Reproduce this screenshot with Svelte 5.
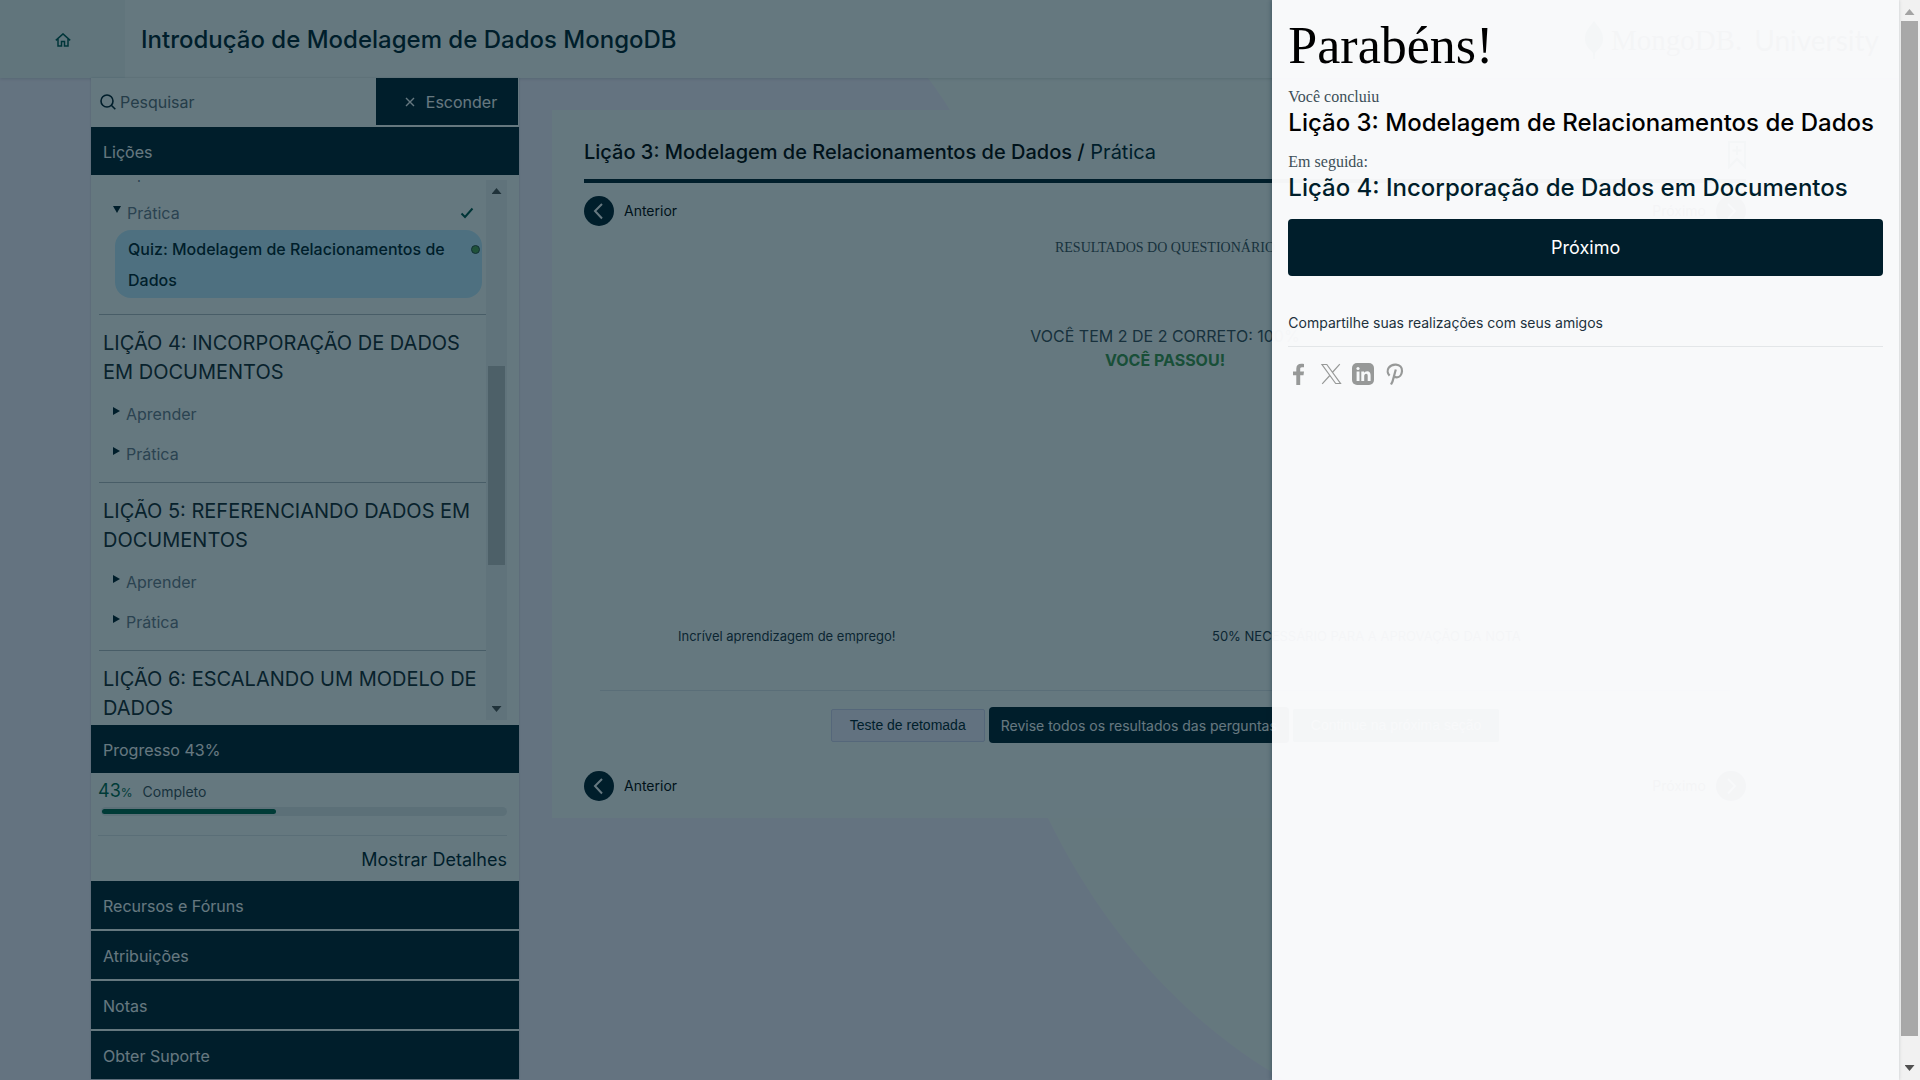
<script>
  import { onMount } from 'svelte';

  const lessons = [
    { title: 'LIÇÃO 4: INCORPORAÇÃO DE DADOS EM DOCUMENTOS', items: ['Aprender', 'Prática'] },
    { title: 'LIÇÃO 5: REFERENCIANDO DADOS EM DOCUMENTOS', items: ['Aprender', 'Prática'] },
    { title: 'LIÇÃO 6: ESCALANDO UM MODELO DE DADOS', items: [] }
  ];
  const sections = ['Recursos e Fóruns', 'Atribuições', 'Notas', 'Obter Suporte'];
  const progress = 43;

  let list;
  onMount(() => {
    list.scrollTop = 27;
  });
</script>

{#snippet check()}
  <svg class="check" viewBox="0 0 14 12" aria-hidden="true"><path d="M1.5 6.5 5 10 12.5 1.5" /></svg>
{/snippet}

{#snippet pager(next)}
  <div class="pager">
    <a class="page-link" href="#anterior">
      <span class="round"><svg viewBox="0 0 30 30" aria-hidden="true"><path d="M18 8l-7 7 7 7.500" /></svg></span>
      <span class="word">Anterior</span>
    </a>
    <a class="page-link" href="#proximo">
      <span class="word">{next}</span>
      <span class="round"><svg viewBox="0 0 30 30" aria-hidden="true"><path d="M12 8l7 7-7 7.500" /></svg></span>
    </a>
  </div>
{/snippet}

<div class="shell">
  <div class="page">
    <svg class="backdrop" viewBox="0 0 1899 1080" preserveAspectRatio="xMinYMin slice" aria-hidden="true">
      <path d="M928 78 C960 120 985 170 1000 240 C985 480 990 700 1048 818 C1100 925 1180 1020 1285 1080 H1899 V78Z" />
    </svg>

    <header>
      <a class="home" href="#inicio" aria-label="Início">
        <svg viewBox="0 0 16 14" aria-hidden="true"><path d="M.8 7.400 8 .9l7.200 6.500M3 6v7h3.500V8.500h3V13H13V6" /></svg>
      </a>
      <h1>Introdução de Modelagem de Dados MongoDB</h1>
      <div class="brand">
        <svg viewBox="0 0 18 38" aria-hidden="true"><path d="M9 0c3 5 9 9 9 18 0 7-5 10-8 14l-.5 6h-1L8 32C5 28 0 25 0 18 0 9 6 5 9 0z" /></svg>
        <span class="brand-name">MongoDB.</span>
        <span class="brand-unit">University</span>
      </div>
    </header>

    <div class="body">
      <aside>
        <div class="search">
          <label for="q" aria-label="Pesquisar">
            <svg viewBox="0 0 16 16" aria-hidden="true"><circle cx="7" cy="7" r="6" /><path d="M11.300 11.300 15.300 15.300" /></svg>
          </label>
          <input id="q" type="text" placeholder="Pesquisar" />
          <button class="hide" type="button">
            <svg viewBox="0 0 10 10" aria-hidden="true"><path d="M1 1l8 8M9 1 1 9" /></svg>
            Esconder
          </button>
        </div>
        <button class="bar" type="button">Lições</button>

        <div class="list-wrap">
          <div class="list" bind:this={list}>
            <section class="first">
              <a class="row" href="#aprender"><i class="tri"></i><span>Aprender</span>{@render check()}</a>
              <a class="row open" href="#pratica"><i class="tri down"></i><span>Prática</span>{@render check()}</a>
              <a class="quiz" href="#quiz"><span>Quiz: Modelagem de Relacionamentos de Dados</span><i class="dot"></i></a>
            </section>
            {#each lessons as lesson}
              <section>
                <h2>{lesson.title}</h2>
                {#each lesson.items as item}
                  <a class="row" href="#item"><i class="tri"></i><span>{item}</span></a>
                {/each}
              </section>
            {/each}
          </div>
          <div class="rail">
            <i class="arrow up"></i>
            <div class="rail-thumb"></div>
            <i class="arrow dn"></i>
          </div>
        </div>

        <button class="bar" type="button">Progresso {progress}%</button>
        <div class="progress">
          <div class="figures"><span class="num">{progress}<small>%</small></span><span>Completo</span></div>
          <div class="track"><div class="fill" style="width: {progress}%"></div></div>
          <a class="details" href="#detalhes">Mostrar Detalhes</a>
        </div>
        <div class="sections">
          {#each sections as name}
            <button class="bar" type="button">{name}</button>
          {/each}
        </div>
      </aside>

      <main>
        <div class="card-head">
          <h2><b>Lição 3: Modelagem de Relacionamentos de Dados /</b> Prática</h2>
          <svg class="bookmark" viewBox="0 0 18 28" aria-hidden="true"><path d="M1 1h16v25l-8-8-8 8zM9 5v9M4.500 9.500h9" /></svg>
        </div>
        {@render pager('Próximo')}
        <div class="results">
          <p class="kicker">RESULTADOS DO QUESTIONÁRIO</p>
          <p class="score">VOCÊ TEM 2 DE 2 CORRETO: 100%</p>
          <p class="passed">VOCÊ PASSOU!</p>
        </div>
        <div class="notes">
          <p>Incrível aprendizagem de emprego!</p>
          <p>50% NECESSÁRIO PARA A APROVAÇÃO DA NOTA</p>
        </div>
        <div class="actions">
          <button class="retake" type="button">Teste de retomada</button>
          <button class="review" type="button">Revise todos os resultados das perguntas</button>
          <button class="continue" type="button">Continue na próxima seção</button>
        </div>
        {@render pager('Próximo')}
      </main>
    </div>
  </div>

  <div class="overlay">
    <div class="drawer" role="dialog" aria-labelledby="congrats">
      <h2 id="congrats">Parabéns!</h2>
      <p class="label">Você concluiu</p>
      <h3>Lição 3: Modelagem de Relacionamentos de Dados</h3>
      <p class="label">Em seguida:</p>
      <h3 class="next-title">Lição 4: Incorporação de Dados em Documentos</h3>
      <button class="next" type="button">Próximo</button>
      <p class="share">Compartilhe suas realizações com seus amigos</p>
      <div class="social">
        <a href="#facebook" aria-label="Facebook"><svg viewBox="0 0 22 22"><path fill="currentColor" d="M8.300 22V12.300H5V8.600h3.300V5.700C8.300 2.400 10.200.7 13.200.7c1.400 0 2.300.1 2.800.2v3.300h-2c-1.500 0-1.800.7-1.800 1.800v2.600H16l-.5 3.700h-3.300V22z" /></svg></a>
        <a href="#x" aria-label="X"><svg viewBox="0 0 22 22"><path fill="none" stroke="currentColor" stroke-width="1.200" d="M2 1.500h4.800L20.500 20.500h-4.800zM19.800 1.200 12.300 9.500M9.800 12.500 2.200 20.800" /></svg></a>
        <a href="#linkedin" aria-label="LinkedIn"><svg viewBox="0 0 22 22"><rect width="22" height="22" rx="5" fill="currentColor" /><g fill="#f7f9fa"><circle cx="6" cy="5.500" r="1.600" /><path d="M4.600 8.500h2.900V18H4.600zM9.300 8.500h2.800v1.400c.5-.9 1.500-1.700 3-1.700 2.600 0 3.500 1.600 3.500 4.300V18h-2.900v-5c0-1.400-.4-2.200-1.500-2.200-1.300 0-2 .9-2 2.400V18H9.300z" /></g></svg></a>
        <a href="#pinterest" aria-label="Pinterest"><svg viewBox="0 0 22 22"><path fill="none" stroke="currentColor" stroke-width="2.200" d="M5.600 12.600C3.400 10.500 3 7.200 4.800 4.700 6.500 2.300 9.400 1.400 12 1.600c3.700.3 6.300 2.800 6 6.500-.3 3.700-2.500 6.400-5.200 6.300-1.600-.1-2.700-.9-3.100-2.100M11.800 6.500 8.500 18.500 7 21.500" /></svg></a>
      </div>
    </div>
  </div>

  <div class="window-rail">
    <i class="arrow up"></i>
    <div class="window-thumb"></div>
    <i class="arrow dn"></i>
  </div>
</div>

<style>
  :global(body) { margin: 0; }
  .shell {
    --navy: #001e2b;
    --serif: "Liberation Serif", serif;
    display: grid;
    grid-template-columns: minmax(0, 1fr) 21px;
    min-height: 100vh;
    font-family: Inter, "Liberation Sans", sans-serif;
    font-size: 16px;
    color: var(--navy);
  }
  .shell * { box-sizing: border-box; }
  h1, h2, h3, p { margin: 0; font-weight: 400; }
  a { color: inherit; text-decoration: none; }
  button, input { font: inherit; color: inherit; border: 0; margin: 0; border-radius: 0; }
  svg { display: block; }

  .page {
    grid-area: 1 / 1;
    position: relative;
    background: #fbf2ff;
    overflow: hidden;
  }
  .backdrop { position: absolute; inset: 0; width: 100%; height: 100%; fill: #fdfffb; }

  header {
    position: relative;
    display: flex;
    align-items: center;
    height: 78px;
    padding: 2px 20px 0 0;
    background: #fdfffc;
    box-shadow: 0 1px 3px rgba(0, 30, 43, 0.15);
  }
  .home {
    display: flex;
    align-items: center;
    justify-content: center;
    width: 125px;
    height: 78px;
    margin-top: -2px;
    padding-top: 2px;
    background: #f2f8f6;
  }
  .home svg { width: 16px; height: 14px; fill: none; stroke: #00574f; stroke-width: 1.500; }
  h1 { flex: 1; padding-left: 16px; font-size: 24px; font-weight: 500; line-height: 32px; }
  .brand { display: flex; align-items: center; color: var(--navy); }
  .brand svg { width: 18px; height: 38px; fill: #00684a; margin-right: 8px; }
  .brand-name { font-family: var(--serif); font-size: 29px; margin-right: 12px; }
  .brand-unit { font-family: Lato, sans-serif; font-size: 28px; }

  .body { position: relative; display: flex; align-items: flex-start; padding: 0 121px 0 91px; gap: 33px; }
  aside { flex: none; width: 428px; background: #fdfffc; box-shadow: 0 0 2px rgba(0, 30, 43, 0.2); }
  .search { display: flex; align-items: center; height: 49px; padding: 0 1px 2px 9px; }
  .search label svg { width: 16px; height: 16px; fill: none; stroke: var(--navy); stroke-width: 1.600; }
  .search input { flex: 1; min-width: 0; height: 46px; padding: 0 4px; background: none; font-size: 16px; }
  .search input::placeholder { color: #5c6c75; opacity: 1; }
  .hide {
    display: flex;
    align-items: center;
    justify-content: center;
    gap: 11px;
    width: 142px;
    height: 47px;
    padding: 0 0 0 8px;
    background: var(--navy);
    color: #fff;
  }
  .hide svg { width: 10px; height: 10px; stroke: #fff; stroke-width: 1.400; }
  .bar {
    display: block;
    width: 100%;
    height: 48px;
    padding: 2px 12px 0;
    background: var(--navy);
    color: #fff;
    text-align: left;
    font-size: 16px;
  }
  .list-wrap { display: flex; padding: 5px 12px 5px 8px; }
  .list { flex: 1; height: 540px; overflow: hidden; }
  .list section { padding: 14px 0 8px; border-top: 1px solid #b5bcc0; }
  .list .first { padding: 0 0 16px; border: 0; }
  .list section:last-child { min-height: 120px; }
  .list h2 { padding: 0 4px; margin-bottom: 7px; font-size: 20px; line-height: 29px; color: #16292f; }
  .row { display: flex; align-items: center; height: 40px; padding: 0 12px 0 14px; color: #6c7a89; }
  .row span { flex: 1; padding-left: 6px; }
  .row.open { height: 37px; padding-top: 2px; }
  .tri { width: 7px; height: 8px; margin-bottom: 6px; background: var(--navy); clip-path: polygon(0 0, 100% 50%, 0 100%); }
  .tri.down { width: 8px; height: 7px; clip-path: polygon(0 0, 100% 0, 50% 100%); }
  .check { width: 14px; height: 12px; fill: none; stroke: #00574a; stroke-width: 2; }
  .quiz {
    display: flex;
    align-items: flex-start;
    justify-content: space-between;
    min-height: 68px;
    margin: 0 4px 0 16px;
    padding: 4px 2px 2px 13px;
    border-radius: 16px;
    background: #c3ecff;
    font-size: 16px;
    font-weight: 500;
    line-height: 31px;
  }
  .quiz span { max-width: 336px; }
  .dot { flex: none; width: 9px; height: 9px; margin-top: 11px; border: 1px solid #2c4a44; border-radius: 50%; background: #50a150; }

  .rail { display: flex; flex-direction: column; align-items: center; width: 21px; padding: 8px 0; background: #f0f3f2; }
  .rail-thumb { width: 17px; height: 199px; margin: 172px 0 auto; background: #c1c4c4; }
  .arrow { width: 10px; height: 6px; background: #505050; }
  .arrow.up { clip-path: polygon(50% 0, 100% 100%, 0 100%); }
  .arrow.dn { clip-path: polygon(0 0, 100% 0, 50% 100%); }

  .progress { display: flex; flex-direction: column; height: 108px; padding: 5px 12px 0 7px; }
  .figures { display: flex; align-items: baseline; gap: 10px; line-height: 26px; font-size: 14px; color: #3d4f58; }
  .num { font-size: 18px; color: #00684a; }
  small { font-size: 12px; }
  .track { height: 9px; margin: 1px 0 0 3px; padding: 2px 1px; border-radius: 5px; background: #e6ebec; }
  .fill { height: 5px; border-radius: 3px; background: #00684a; }
  .details { margin-top: 19px; padding-top: 11px; border-top: 1px solid #e1e6e8; text-align: right; font-size: 18px; line-height: 26px; }
  .sections { display: flex; flex-direction: column; gap: 2px; }

  main { flex: 1; min-width: 0; margin-top: 32px; padding: 27px 32px 17px; background: #fdfffc; }
  .card-head { display: flex; justify-content: space-between; height: 46px; border-bottom: 4px solid var(--navy); }
  .card-head h2 { font-size: 20px; line-height: 30px; }
  .card-head b { font-weight: 500; color: #000; }
  .bookmark { width: 18px; height: 28px; margin-top: 4px; fill: none; stroke: #00684a; stroke-width: 2; }
  .pager { display: flex; justify-content: space-between; margin-top: 13px; font-size: 14px; color: #000; }
  .page-link { display: flex; align-items: center; gap: 10px; }
  .word { padding-bottom: 2px; }
  .round { width: 30px; height: 30px; border-radius: 50%; background: var(--navy); }
  .round svg { fill: none; stroke: #fff; stroke-width: 2; }
  .results { padding-top: 10px; text-align: center; line-height: 24px; color: #3d4f58; }
  .kicker { margin-bottom: 64px; font-family: var(--serif); font-size: 14px; }
  .passed { font-weight: 700; color: #3f9a4c; }
  .notes { display: grid; grid-template-columns: 1fr 1fr; padding: 252px 44px 42px 94px; font-size: 13px; line-height: 24px; color: #21313c; }
  .notes p:last-child { padding-left: 22px; }
  .actions { display: flex; align-items: center; justify-content: center; gap: 4px; margin: 0 16px 28px; padding-top: 16px; border-top: 1px solid #e1e6ea; font-size: 14px; }
  .retake, .continue { height: 33px; padding: 0 18px; font-family: "Liberation Sans", sans-serif; border-radius: 2px; }
  .retake { border: 1px solid #d5d5f0; background: #f4f0ff; }
  .review { height: 36px; padding: 0 12px; border-radius: 4px; background: var(--navy); color: #fff; }
  .continue { background: #116149; color: #fff; }

  .overlay {
    grid-area: 1 / 1;
    position: relative;
    display: flex;
    justify-content: flex-end;
    background: rgba(0, 30, 43, 0.6);
  }
  .drawer { width: 33%; padding: 18px 16px; background: rgba(254, 254, 255, 0.96); box-shadow: -1px 0 4px rgba(0, 30, 43, 0.3); color: #000; }
  .drawer h2 { font-family: var(--serif); font-size: 52px; line-height: 56px; }
  .label { margin-top: 13px; font-family: var(--serif); font-size: 16px; line-height: 20px; color: #3d4f58; }
  .drawer h3 { font-size: 24px; font-weight: 500; line-height: 32px; white-space: nowrap; }
  .drawer .next-title { color: var(--navy); }
  .next { width: 100%; height: 57px; margin-top: 15px; border-radius: 4px; background: var(--navy); color: #fff; font-size: 18px; }
  .share { margin-top: 34px; padding-bottom: 10px; border-bottom: 1px solid #e3e6e8; font-size: 14px; line-height: 26px; color: #21313c; }
  .social { display: flex; gap: 10px; padding-top: 16px; color: #979998; }
  .social svg { width: 22px; height: 22px; }

  .window-rail { display: flex; flex-direction: column; align-items: center; padding: 9px 0; background: #f1f1f1; }
  .window-thumb { flex: 1; width: 17px; margin: 6px 0 29px; background: #a8a8a8; }
  .window-rail .up { background: #a3a3a3; }
</style>
